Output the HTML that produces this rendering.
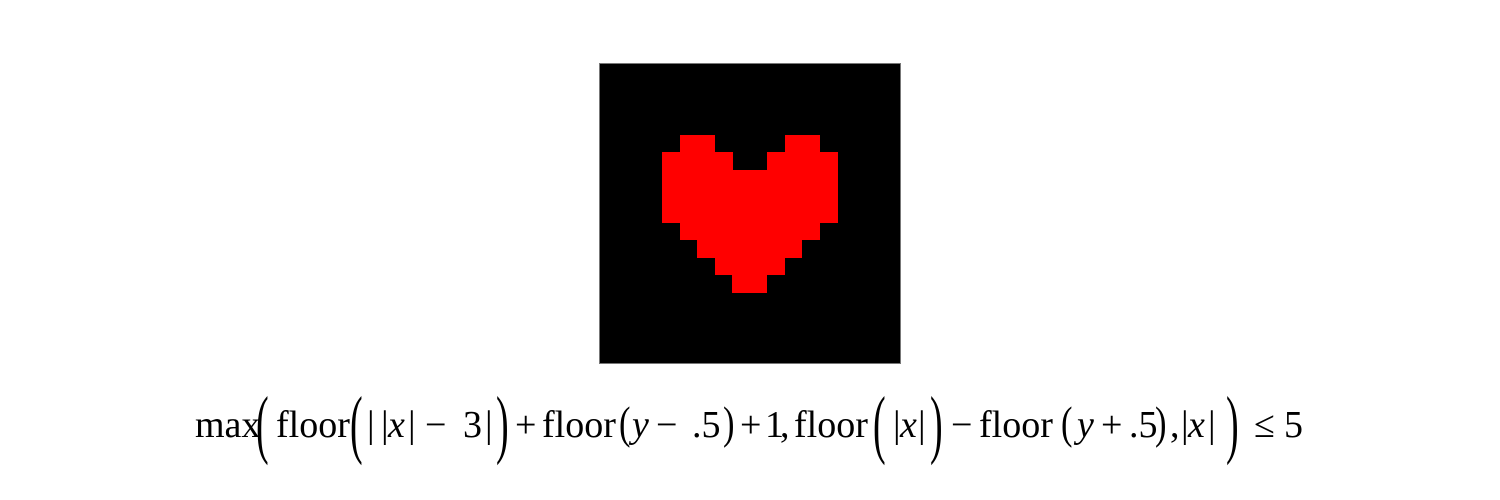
<!DOCTYPE html>
<html><head><style>
body{margin:0;width:1500px;height:500px;background:#fff;position:relative;overflow:hidden}
.box{position:absolute;left:599px;top:63px;width:300px;height:299px;background:#000;border:1px solid #777}
.c{position:absolute;background:#f00}
.t{position:absolute;top:406px;font-family:"Liberation Serif",serif;font-size:38px;line-height:1;white-space:nowrap;color:#000}
.m{position:absolute;top:400px;font-family:"Liberation Serif",serif;font-size:46px;line-height:1;transform-origin:0 0;transform:scaleX(0.75)}
.p{position:absolute;top:386px;font-family:"Liberation Serif",serif;font-size:76px;line-height:1;transform-origin:0 0;transform:scaleX(0.5)}
i{font-style:italic}
</style></head><body>
<div class="box"></div>
<div class="c" style="left:680px;top:135px;width:35px;height:18px"></div>
<div class="c" style="left:785px;top:135px;width:35px;height:18px"></div>
<div class="c" style="left:662px;top:152px;width:71px;height:18px"></div>
<div class="c" style="left:767px;top:152px;width:71px;height:18px"></div>
<div class="c" style="left:662px;top:170px;width:176px;height:53px"></div>
<div class="c" style="left:680px;top:222px;width:140px;height:18px"></div>
<div class="c" style="left:697px;top:240px;width:105px;height:18px"></div>
<div class="c" style="left:715px;top:257px;width:70px;height:18px"></div>
<div class="c" style="left:732px;top:275px;width:35px;height:18px"></div>

<div class="t" style="left:195px">max</div>
<div class="p" style="left:256px">(</div>
<div class="t" style="left:276px">floor</div>
<div class="p" style="left:350px">(</div>
<div class="t" style="left:367px">|</div>
<div class="t" style="left:381px">|</div>
<div class="t" style="left:388px"><i>x</i></div>
<div class="t" style="left:408px">|</div>
<div class="t" style="left:425px">−</div>
<div class="t" style="left:463px">3</div>
<div class="t" style="left:485px">|</div>
<div class="p" style="left:496px">)</div>
<div class="t" style="left:515px">+</div>
<div class="t" style="left:542px">floor</div>
<div class="m" style="left:619px">(</div>
<div class="t" style="left:632px"><i>y</i></div>
<div class="t" style="left:656px">−</div>
<div class="t" style="left:692px">.5</div>
<div class="m" style="left:723px">)</div>
<div class="t" style="left:740px">+</div>
<div class="t" style="left:765px">1</div>
<div class="t" style="left:780px">,</div>
<div class="t" style="left:794px">floor</div>
<div class="p" style="left:873px">(</div>
<div class="t" style="left:893px">|</div>
<div class="t" style="left:900px"><i>x</i></div>
<div class="t" style="left:918px">|</div>
<div class="p" style="left:930px">)</div>
<div class="t" style="left:951px">−</div>
<div class="t" style="left:979px">floor</div>
<div class="m" style="left:1061px">(</div>
<div class="t" style="left:1077px"><i>y</i></div>
<div class="t" style="left:1101px">+</div>
<div class="t" style="left:1129px">.5</div>
<div class="m" style="left:1155px">)</div>
<div class="t" style="left:1170px">,</div>
<div class="t" style="left:1181px">|</div>
<div class="t" style="left:1188px"><i>x</i></div>
<div class="t" style="left:1208px">|</div>
<div class="p" style="left:1226px">)</div>
<div class="t" style="left:1254px">≤</div>
<div class="t" style="left:1284px">5</div>
</body></html>
